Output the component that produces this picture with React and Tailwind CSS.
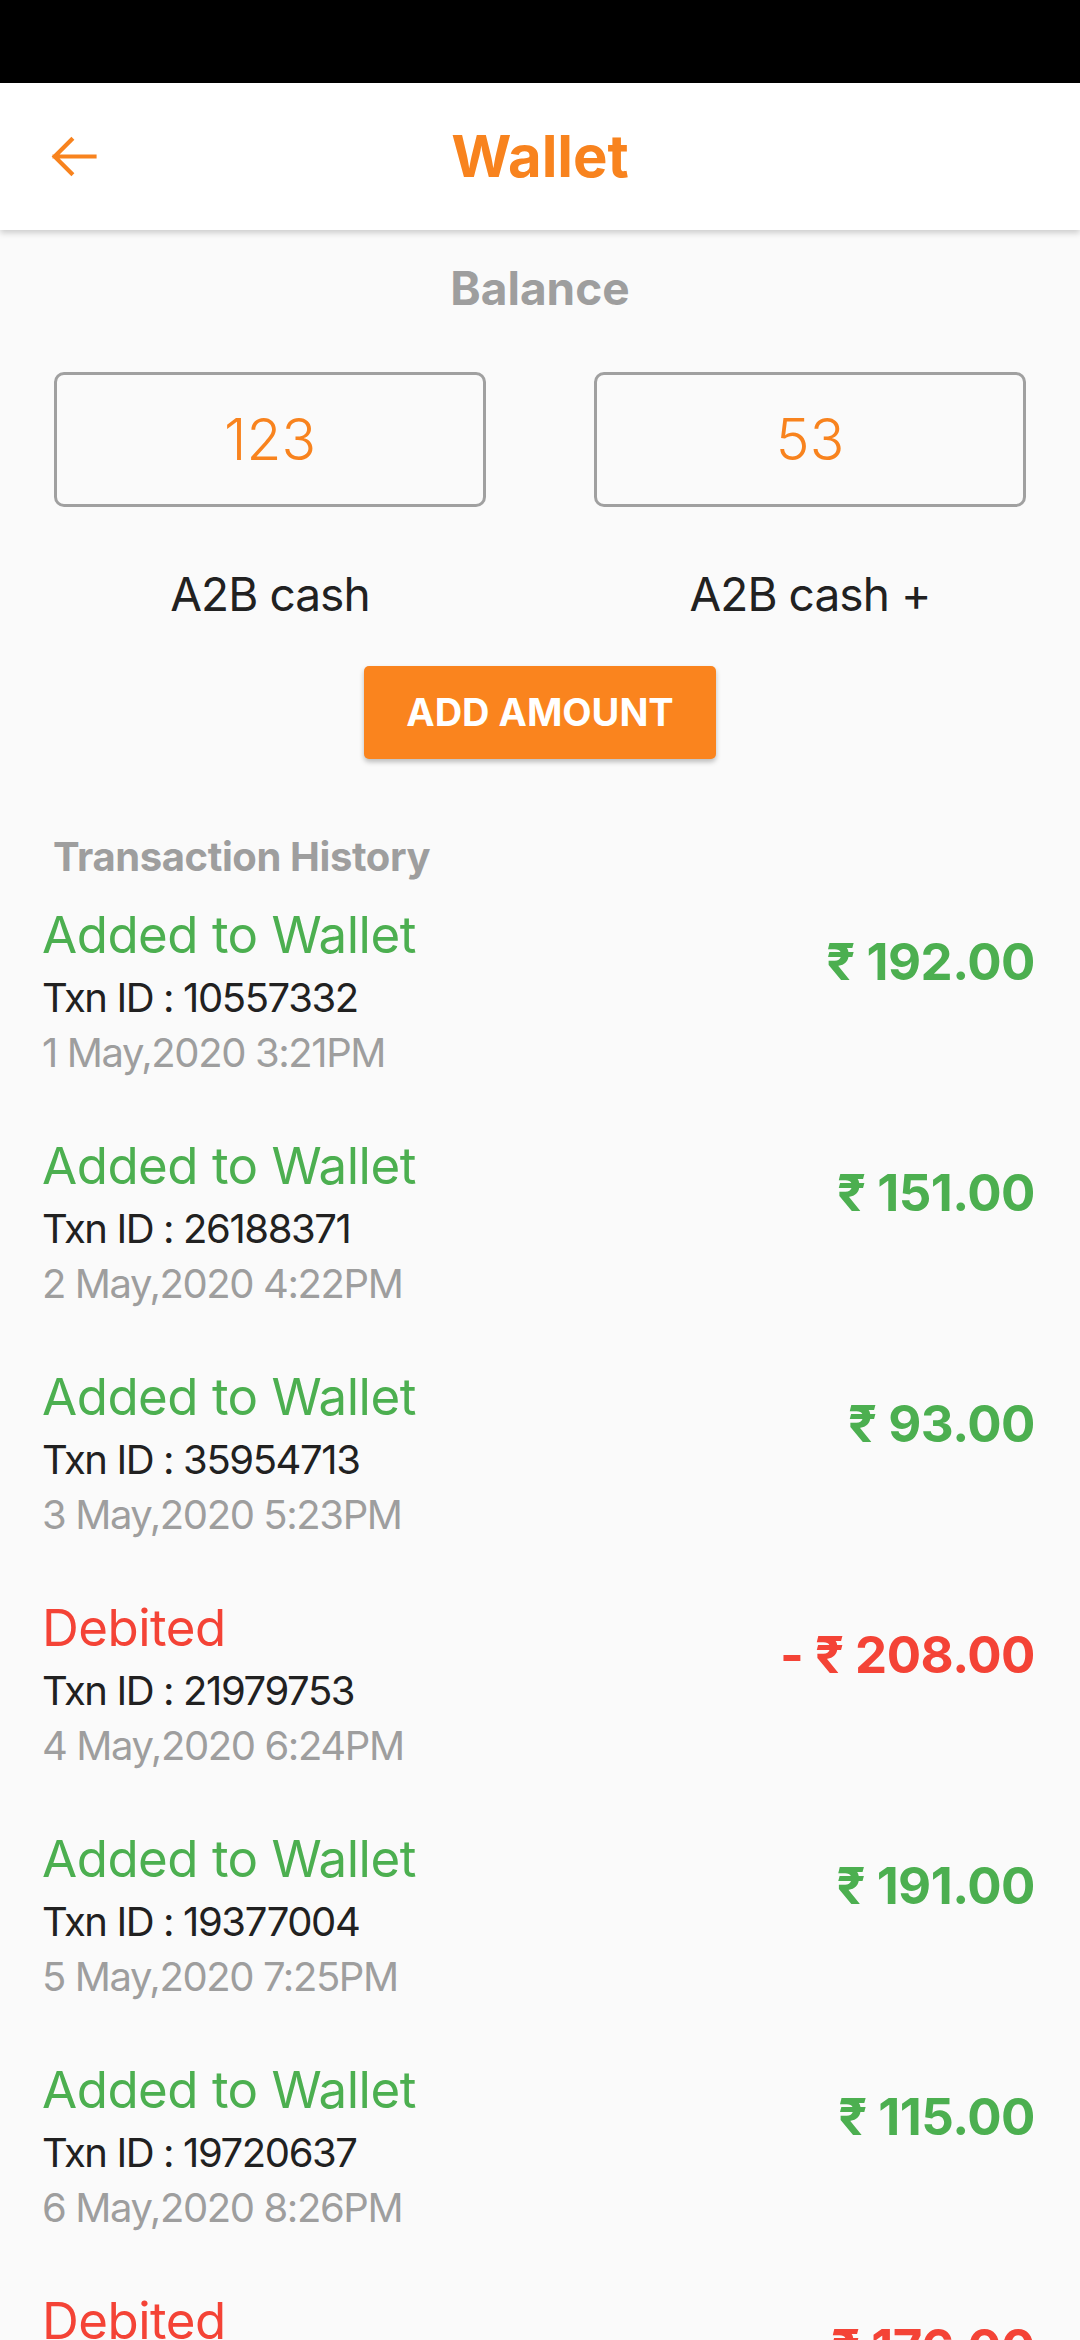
import React from 'react';

const transactions = [
  { type: 'credit', id: '10557332', date: '1 May,2020 3:21PM', amount: '192.00' },
  { type: 'credit', id: '26188371', date: '2 May,2020 4:22PM', amount: '151.00' },
  { type: 'credit', id: '35954713', date: '3 May,2020 5:23PM', amount: '93.00' },
  { type: 'debit', id: '21979753', date: '4 May,2020 6:24PM', amount: '208.00' },
  { type: 'credit', id: '19377004', date: '5 May,2020 7:25PM', amount: '191.00' },
  { type: 'credit', id: '19720637', date: '6 May,2020 8:26PM', amount: '115.00' },
  { type: 'debit', id: '20481756', date: '7 May,2020 9:27PM', amount: '176.00' },
];

const BackArrow = () => (
  <svg width="63" height="63" viewBox="0 0 24 24" fill="none">
    <path d="M20 12H4.8M11.2 5.6 4.8 12l6.4 6.4" stroke="#f8831e" strokeWidth="1.6" strokeLinecap="square" />
  </svg>
);

const TxnRow = ({ txn }) => {
  const debit = txn.type === 'debit';
  return (
    <div className="flex items-start justify-between pl-[42px] pr-[45px] pb-[56px]">
      <div className="flex flex-col">
        <span className={`text-[51px] leading-[60px] tracking-[-0.01em] ${debit ? 'text-[#f44336]' : 'text-[#4caf50]'}`}>
          {debit ? 'Debited' : 'Added to Wallet'}
        </span>
        <span className="mt-[5px] text-[40px] leading-[55px] text-[#212121] tracking-[-0.035em]">Txn ID : {txn.id}</span>
        <span className="text-[40px] leading-[55px] text-[#9e9e9e] tracking-[-0.035em]">{txn.date}</span>
      </div>
      <span className={`mt-[27px] text-[51px] leading-[60px] font-bold tracking-[-0.01em] ${debit ? 'text-[#f44336]' : 'text-[#4caf50]'}`}>
        {debit ? '- ' : ''}₹ {txn.amount}
      </span>
    </div>
  );
};

const App = () => {
  return (
    <div
      className="h-[2340px] w-[1080px] overflow-hidden bg-[#fafafa]"
      style={{ fontFamily: 'Inter, "Noto Sans", sans-serif' }}
    >
      <div className="h-[83px] bg-black" />
      <header className="relative z-10 flex h-[147px] items-center bg-white shadow-[0_3px_6px_rgba(0,0,0,0.18)]">
        <div className="absolute left-[42px] top-[42px]">
          <BackArrow />
        </div>
        <h1 className="w-full text-center text-[58px] font-bold text-[#f8831e]">Wallet</h1>
      </header>

      <div className="mt-[30px] text-center text-[46px] leading-[56px] font-bold text-[#9e9e9e]">Balance</div>

      <div className="mt-[56px] grid grid-cols-2 gap-[108px] px-[54px]">
        <div className="flex h-[135px] items-center justify-center rounded-[10px] border-[3px] border-[#a0a0a0] text-[57px] font-light text-[#f8831e]">
          123
        </div>
        <div className="flex h-[135px] items-center justify-center rounded-[10px] border-[3px] border-[#a0a0a0] text-[57px] font-light text-[#f8831e]">
          53
        </div>
      </div>

      <div className="mt-[59px] grid grid-cols-2 gap-[108px] px-[54px] text-center text-[46px] leading-[56px] text-[#212121] tracking-[-0.02em]">
        <span>A2B cash</span>
        <span>A2B cash +</span>
      </div>

      <div className="mt-[44px] flex justify-center">
        <button className="h-[93px] w-[352px] rounded-[5px] bg-[#fa841e] text-[38px] font-bold text-white shadow-[0_3px_5px_rgba(0,0,0,0.25)]">
          ADD AMOUNT
        </button>
      </div>

      <div className="mt-[74px] pl-[53px] text-[40px] leading-[48px] font-bold text-[#9e9e9e] tracking-[-0.01em]">
        Transaction History
      </div>

      <div className="mt-[24px] flex flex-col">
        {transactions.map((t) => (
          <TxnRow key={t.id} txn={t} />
        ))}
      </div>
    </div>
  );
};

export default App;
